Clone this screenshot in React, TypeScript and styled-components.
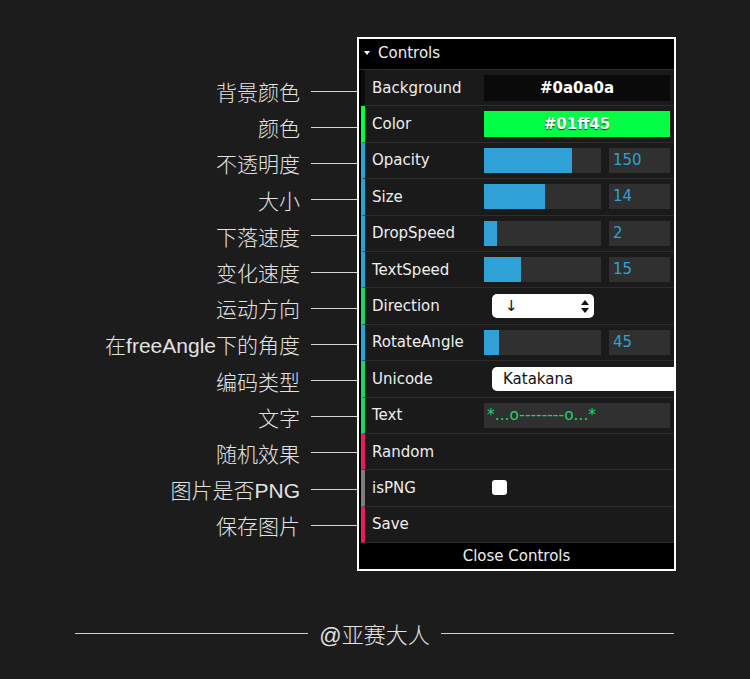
import React from 'react';
import styled, { createGlobalStyle } from 'styled-components';

type Kind = 'color' | 'slider' | 'select' | 'text' | 'button' | 'check';

interface Control {
  label: string;
  note: string;
  kind: Kind;
  strip: string;
  value?: string;
  num?: number;
  max?: number;
  wide?: boolean;
}

const BLUE = '#2fa1d6';
const GREEN = '#1ed36f';
const PINK = '#e61d5f';

const controls: Control[] = [
  { label: 'Background', note: '背景颜色', kind: 'color', strip: '#0a0a0a', value: '#0a0a0a' },
  { label: 'Color', note: '颜色', kind: 'color', strip: '#01ff45', value: '#01ff45' },
  { label: 'Opacity', note: '不透明度', kind: 'slider', strip: BLUE, num: 150, max: 200 },
  { label: 'Size', note: '大小', kind: 'slider', strip: BLUE, num: 14, max: 27 },
  { label: 'DropSpeed', note: '下落速度', kind: 'slider', strip: BLUE, num: 2, max: 18 },
  { label: 'TextSpeed', note: '变化速度', kind: 'slider', strip: BLUE, num: 15, max: 47 },
  { label: 'Direction', note: '运动方向', kind: 'select', strip: GREEN, value: '↓' },
  { label: 'RotateAngle', note: '在freeAngle下的角度', kind: 'slider', strip: BLUE, num: 45, max: 360 },
  { label: 'Unicode', note: '编码类型', kind: 'select', strip: GREEN, value: 'Katakana', wide: true },
  { label: 'Text', note: '文字', kind: 'text', strip: GREEN, value: '*...o--------o...*' },
  { label: 'Random', note: '随机效果', kind: 'button', strip: PINK },
  { label: 'isPNG', note: '图片是否PNG', kind: 'check', strip: '#7d7d7d' },
  { label: 'Save', note: '保存图片', kind: 'button', strip: PINK },
];

const GlobalStyle = createGlobalStyle`
  html, body {
    margin: 0;
    padding: 0;
    background: #1c1c1c;
  }
  body {
    width: 750px;
    height: 679px;
    overflow: hidden;
  }
`;

const Page = styled.div`
  display: flex;
  flex-direction: column;
  width: 750px;
  height: 679px;
`;

const Stage = styled.div`
  display: flex;
  padding-top: 37px;
`;

const Notes = styled.div`
  flex: 0 0 357px;
  display: flex;
  flex-direction: column;
  padding-top: 36px;
`;

const Note = styled.div`
  height: 36.2px;
  display: flex;
  align-items: center;
  justify-content: flex-end;
  gap: 11px;
  font-family: "Liberation Sans", "Noto Sans CJK SC", sans-serif;
  font-weight: 300;
  font-size: 21px;
  color: #e2e2e2;
`;

const NoteLine = styled.span`
  width: 46px;
  height: 1px;
  background: #d4d4d4;
`;

const Panel = styled.div`
  width: 315px;
  border: 2px solid #fff;
  background: #000;
  font-family: "DejaVu Sans", sans-serif;
  font-size: 15px;
  color: #eee;
  overflow: hidden;
`;

const Title = styled.div`
  height: 31px;
  box-sizing: border-box;
  padding: 0 0 3px 5px;
  display: flex;
  align-items: center;
  gap: 8px;
  border-bottom: 1px solid #2c2c2c;
`;

const Caret = styled.span`
  width: 0;
  height: 0;
  border-left: 3px solid transparent;
  border-right: 3px solid transparent;
  border-top: 4px solid #fff;
`;

const Rows = styled.div`
  padding-left: 2px;
`;

const Row = styled.div<{ $strip: string }>`
  height: 36.4px;
  box-sizing: border-box;
  display: flex;
  align-items: center;
  background: #1a1a1a;
  border-left: 4px solid ${({ $strip }) => $strip};
  border-bottom: 1px solid #2c2c2c;
  overflow: hidden;
`;

const Label = styled.div`
  flex: 0 0 119px;
  box-sizing: border-box;
  padding-left: 7px;
  white-space: nowrap;
`;

const Field = styled.div`
  flex: 1;
  min-width: 0;
  display: flex;
  align-items: center;
  gap: 8px;
  padding-right: 4px;
`;

const Swatch = styled.div<{ $bg: string }>`
  flex: 1;
  height: 26px;
  line-height: 26px;
  text-align: center;
  background: ${({ $bg }) => $bg};
  color: #fff;
  font-weight: bold;
  text-shadow: 0 1px 1px rgba(0, 0, 0, 0.7);
`;

const Track = styled.div`
  width: 117px;
  height: 25px;
  background: #303030;
`;

const Fill = styled.div`
  height: 100%;
  background: ${BLUE};
`;

const NumberBox = styled.div`
  width: 61px;
  height: 25px;
  line-height: 25px;
  box-sizing: border-box;
  padding-left: 4px;
  background: #303030;
  color: ${BLUE};
`;

const TextBox = styled.div`
  flex: 1;
  height: 25px;
  line-height: 25px;
  padding-left: 3px;
  background: #303030;
  color: ${GREEN};
  font-size: 15.5px;
  white-space: nowrap;
`;

const Select = styled.div<{ $wide?: boolean }>`
  flex: 0 0 ${({ $wide }) => ($wide ? '200px' : '102px')};
  margin-left: 8px;
  height: 24px;
  box-sizing: border-box;
  display: flex;
  align-items: center;
  justify-content: space-between;
  padding: 0 5px 0 ${({ $wide }) => ($wide ? '11px' : '13px')};
  background: #fff;
  border-radius: 5px;
  color: #111;
`;

const Checkbox = styled.div`
  margin-left: 8px;
  width: 15px;
  height: 15px;
  border-radius: 3px;
  background: #fff;
`;

const Close = styled.div`
  height: 26px;
  line-height: 26px;
  text-align: center;
  background: #000;
`;

const Footer = styled.div`
  display: flex;
  align-items: center;
  gap: 11px;
  width: 599px;
  height: 30px;
  margin-top: 47px;
  margin-left: 75px;
  font-family: "Liberation Sans", "Noto Sans CJK SC", sans-serif;
  font-weight: 300;
  font-size: 22px;
  color: #e2e2e2;
`;

const FooterLine = styled.span`
  flex: 1;
  height: 1px;
  background: #cfcfcf;
`;

const UpDown = () => (
  <svg width="8" height="13" viewBox="0 0 8 13">
    <path d="M4 0 L8 5 H0 Z" fill="#111" />
    <path d="M4 13 L8 8 H0 Z" fill="#111" />
  </svg>
);

const renderField = (c: Control) => {
  switch (c.kind) {
    case 'color':
      return <Swatch $bg={c.value!}>{c.value}</Swatch>;
    case 'slider': {
      const pct = ((c.num ?? 0) / (c.max ?? 1)) * 100;
      return (
        <>
          <Track>
            <Fill style={{ width: `${pct}%` }} />
          </Track>
          <NumberBox>{c.num}</NumberBox>
        </>
      );
    }
    case 'select':
      return (
        <Select $wide={c.wide}>
          <span>{c.value}</span>
          {!c.wide && <UpDown />}
        </Select>
      );
    case 'text':
      return <TextBox>{c.value}</TextBox>;
    case 'check':
      return <Checkbox />;
    default:
      return null;
  }
};

export default function App() {
  return (
    <Page>
      <GlobalStyle />
      <Stage>
        <Notes>
          {controls.map((c) => (
            <Note key={c.label}>
              <span>{c.note}</span>
              <NoteLine />
            </Note>
          ))}
        </Notes>
        <Panel>
          <Title>
            <Caret />
            <span>Controls</span>
          </Title>
          <Rows>
            {controls.map((c) => (
              <Row key={c.label} $strip={c.strip}>
                <Label>{c.label}</Label>
                <Field>{renderField(c)}</Field>
              </Row>
            ))}
          </Rows>
          <Close>Close Controls</Close>
        </Panel>
      </Stage>
      <Footer>
        <FooterLine />
        <span>@亚赛大人</span>
        <FooterLine />
      </Footer>
    </Page>
  );
}
